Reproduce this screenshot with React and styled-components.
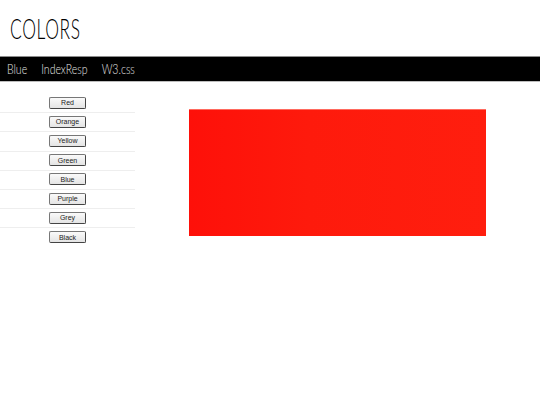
import React from "react";
import styled, { createGlobalStyle } from "styled-components";

const GlobalStyle = createGlobalStyle`
  html, body {
    margin: 0;
    padding: 0;
    background: #fff;
  }
`;

const Page = styled.div`
  width: 540px;
  height: 405px;
  overflow: hidden;
  display: flex;
  flex-direction: column;
  font-family: "Lato", "Liberation Sans", sans-serif;
`;

const Header = styled.header`
  height: 56px;
  box-sizing: border-box;
  padding: 13px 0 0 10px;
`;

const Title = styled.h1`
  margin: 0;
  font-size: 28px;
  line-height: 30px;
  font-weight: 300;
  color: #000;
  letter-spacing: 1px;
  transform: scaleX(0.62);
  transform-origin: left center;
`;

const Nav = styled.nav`
  height: 26px;
  box-sizing: border-box;
  background: #000;
  border-top: 1px solid #8c8c8c;
  border-bottom: 1px solid #bdbdbd;
  display: flex;
  align-items: center;
  padding-left: 7px;
`;

const NavLinks = styled.div`
  display: flex;
  gap: 18px;
  transform: scaleX(0.78);
  transform-origin: left center;
`;

const NavLink = styled.a`
  color: #e4e4e4;
  font-size: 13.5px;
  font-weight: 300;
`;

const Main = styled.main`
  display: flex;
  align-items: flex-start;
  padding-top: 12px;
`;

const Sidebar = styled.ul`
  width: 135px;
  margin: 0;
  padding: 0;
  list-style: none;
  flex-shrink: 0;
`;

const Item = styled.li`
  height: 19.2px;
  box-sizing: border-box;
  border-bottom: 1px solid #eeeeee;
  display: flex;
  align-items: center;
  justify-content: center;
  padding-bottom: 1px;
  &:last-child {
    border-bottom: none;
  }
`;

const ColorButton = styled.button`
  width: 37px;
  height: 12px;
  padding: 0;
  box-sizing: border-box;
  border: 1px solid #777;
  border-bottom: 1.5px solid #444;
  border-right: 1.5px solid #444;
  border-radius: 2px;
  background: linear-gradient(#fafafa, #e4e4e4);
  font-family: "Liberation Sans", sans-serif;
  font-size: 7px;
  line-height: 9px;
  color: #222;
`;

const Swatch = styled.div`
  width: 297px;
  height: 127px;
  margin: 15px 0 0 54px;
  background-image: linear-gradient(90deg, #fe1009 0%, #fe1a0c 40%, #ff1e0e 100%);
  border-top: 1px solid #ff6a5e;
  box-sizing: border-box;
`;

const colors = ["Red", "Orange", "Yellow", "Green", "Blue", "Purple", "Grey", "Black"];

export default function App() {
  return (
    <Page>
      <GlobalStyle />
      <Header>
        <Title>COLORS</Title>
      </Header>
      <Nav>
        <NavLinks>
          <NavLink>Blue</NavLink>
          <NavLink>IndexResp</NavLink>
          <NavLink>W3.css</NavLink>
        </NavLinks>
      </Nav>
      <Main>
        <Sidebar>
          {colors.map((c) => (
            <Item key={c}>
              <ColorButton>{c}</ColorButton>
            </Item>
          ))}
        </Sidebar>
        <Swatch />
      </Main>
    </Page>
  );
}
